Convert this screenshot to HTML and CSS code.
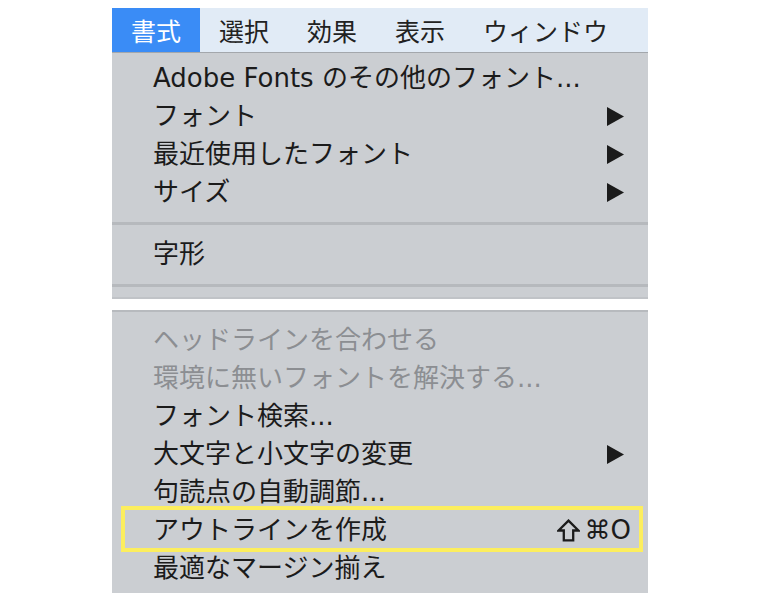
FILE: index.html
```html
<!DOCTYPE html>
<html lang="ja">
<head>
  <meta charset="UTF-8">
  <title>書式メニュー</title>
  <link rel="stylesheet" href="styles.css">
</head>
<body>
  <div class="menu">
    <div class="menubar">
      <span class="menubar-item active">書式</span>
      <span class="menubar-item">選択</span>
      <span class="menubar-item">効果</span>
      <span class="menubar-item">表示</span>
      <span class="menubar-item">ウィンドウ</span>
    </div>

    <div class="panel panel-top">
      <div class="item">Adobe Fonts のその他のフォント...</div>
      <div class="item">フォント<svg class="arrow" viewBox="0 0 17 19"><polygon points="0,0 17,9.5 0,19"/></svg></div>
      <div class="item">最近使用したフォント<svg class="arrow" viewBox="0 0 17 19"><polygon points="0,0 17,9.5 0,19"/></svg></div>
      <div class="item">サイズ<svg class="arrow" viewBox="0 0 17 19"><polygon points="0,0 17,9.5 0,19"/></svg></div>
      <div class="sep"></div>
      <div class="item">字形</div>
      <div class="sep"></div>
    </div>

    <div class="gap"></div>

    <div class="panel panel-bottom">
      <div class="item disabled">ヘッドラインを合わせる</div>
      <div class="item disabled">環境に無いフォントを解決する...</div>
      <div class="item">フォント検索...</div>
      <div class="item">大文字と小文字の変更<svg class="arrow" viewBox="0 0 17 19"><polygon points="0,0 17,9.5 0,19"/></svg></div>
      <div class="item">句読点の自動調節...</div>
      <div class="item marked">アウトラインを作成
        <span class="shortcut">
          <svg class="shift" viewBox="0 0 22 22"><polygon points="11,1.5 20.5,11 15.5,11 15.5,20.5 6.5,20.5 6.5,11 1.5,11"/></svg>⌘O
        </span>
      </div>
      <div class="item">最適なマージン揃え</div>
    </div>
  </div>
</body>
</html>
```

FILE: styles.css
```css
body {
  margin: 0;
  background: #fff;
  font-family: "DejaVu Sans", "Noto Sans CJK JP", sans-serif;
  color: #1b1b1b;
}

.menu {
  width: 536px;
  margin: 8px 0 0 112px;
}

.menubar {
  display: flex;
  height: 44px;
  background: #e1ebf6;
  border-bottom: 1px solid #a3a7ac;
}

.menubar-item {
  padding: 0 19px;
  font-family: "Noto Sans CJK JP", sans-serif;
  font-size: 25px;
  line-height: 44px;
  color: #222;
}

.menubar-item.active {
  background: #3a8cf6;
  color: #fff;
}

.panel {
  background: #cbced2;
}

.panel-top {
  padding-top: 6px;
  border-bottom: 2px solid #c0c3c7;
}

.gap {
  height: 11px;
}

.panel-bottom {
  border-top: 2px solid #b7babe;
  padding: 9px 0 6px;
}

.item {
  position: relative;
  display: flex;
  justify-content: space-between;
  align-items: center;
  height: 38px;
  padding: 0 24px 0 41px;
  font-size: 26px;
  line-height: 38px;
  white-space: nowrap;
}

.item.disabled {
  color: #8c8e92;
}

.arrow {
  width: 17px;
  height: 19px;
  fill: #1b1b1b;
}

.sep {
  height: 3px;
  margin: 11px 0 10px;
  background: #b6b9bd;
}

.item.marked {
  padding-right: 17px;
}

.item.marked::after {
  content: "";
  position: absolute;
  left: 9px;
  right: 5px;
  top: -5px;
  bottom: -3px;
  border: 4px solid #fcee5e;
}

.shortcut {
  display: flex;
  align-items: center;
  gap: 5px;
  font-size: 26px;
}

.shift {
  width: 23px;
  height: 23px;
  fill: none;
  stroke: #1b1b1b;
  stroke-width: 2.2;
}
```
